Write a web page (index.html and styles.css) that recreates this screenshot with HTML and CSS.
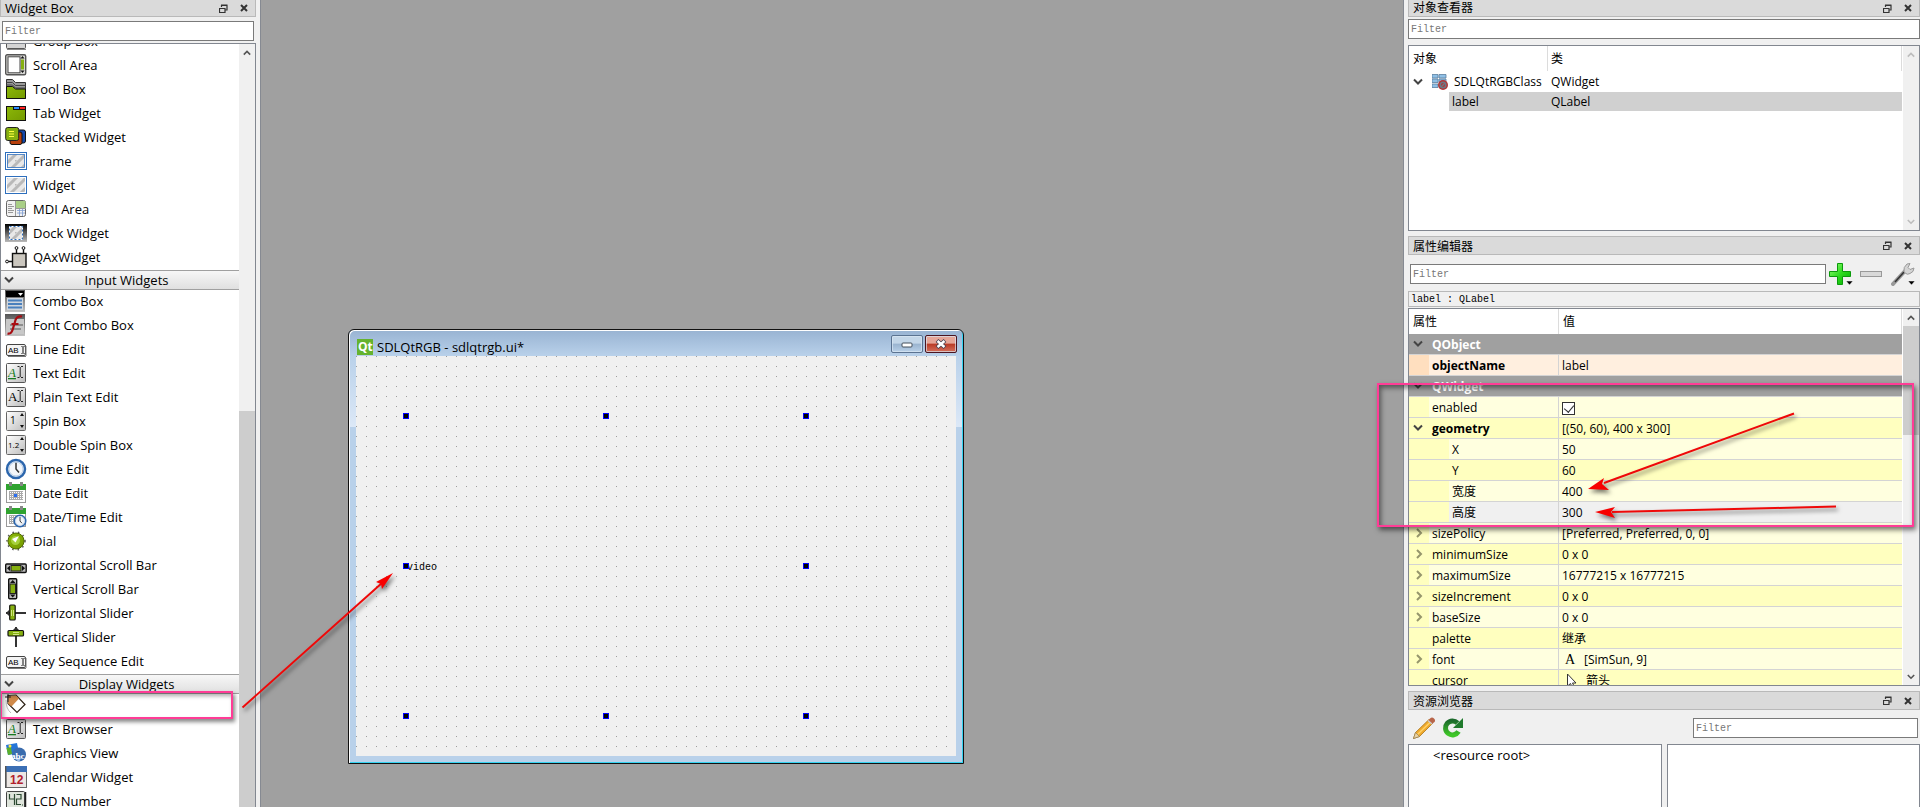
FILE: index.html
```html
<!DOCTYPE html>
<html lang="zh-CN">
<head>
<meta charset="utf-8">
<title>Qt Designer</title>
<link rel="stylesheet" href="styles.css">
</head>
<body>
<svg class="defs" width="0" height="0" aria-hidden="true">
  <defs>
    <linearGradient id="green" x1="0" y1="0" x2="1" y2="1"><stop offset="0" stop-color="#8cb808"/><stop offset="1" stop-color="#749a00"/></linearGradient>
    <linearGradient id="plate" x1="0" y1="0" x2="1" y2="1"><stop offset="0" stop-color="#fff"/><stop offset="1" stop-color="#bcbcbc"/></linearGradient>
    <linearGradient id="dark" x1="0" y1="0" x2="0" y2="1"><stop offset="0" stop-color="#000"/><stop offset="1" stop-color="#bbb"/></linearGradient>
    <linearGradient id="tile" x1="0" y1="0" x2="0" y2="1"><stop offset="0" stop-color="#555"/><stop offset="1" stop-color="#c4c4c4"/></linearGradient>
    <linearGradient id="plus" x1="0" y1="0" x2="1" y2="1"><stop offset="0" stop-color="#9bff7a"/><stop offset=".5" stop-color="#2fdc20"/><stop offset="1" stop-color="#00a800"/></linearGradient>
    <linearGradient id="swirl" x1="0" y1="0" x2="0" y2="1"><stop offset="0" stop-color="#1d6b2c"/><stop offset="1" stop-color="#3fc728"/></linearGradient>
    <pattern id="stripes" width="10" height="10" patternUnits="userSpaceOnUse"><rect width="10" height="10" fill="#e8e8e8"/><path d="M-2 7 7-2M0 15 15 0M-5 5 5-5" stroke="#b9b9b9" stroke-width="3"/></pattern>
    <pattern id="grid" width="10" height="10" patternUnits="userSpaceOnUse"><rect width="1" height="1" fill="#9c9c9c"/></pattern>
    <symbol id="chev-down" viewBox="0 0 10 8"><path d="M1 1.500 5 5.500 9 1.500" fill="none" stroke="currentColor" stroke-width="2"/></symbol>
    <symbol id="chev-up" viewBox="0 0 10 8"><path d="M1 6 5 2 9 6" fill="none" stroke="currentColor" stroke-width="2"/></symbol>
    <symbol id="chev-right" viewBox="0 0 8 10"><path d="M2 1 6 5 2 9" fill="none" stroke="currentColor" stroke-width="2"/></symbol>
    <symbol id="float" viewBox="0 0 9 9"><path d="M2.500 3V1.500H8V6H6.500M2 1H8.500M.500 4.500H6V8.500H.500ZM0 4.500H6.500" fill="none" stroke="#333" stroke-width="1.200"/></symbol>
    <symbol id="close" viewBox="0 0 8 8"><path d="M1 1 7 7M7 1 1 7" stroke="#333" stroke-width="2"/></symbol>
    <symbol id="text-edit" viewBox="0 0 22 22"><rect x="1.500" y="1.500" width="19" height="19" rx="1" fill="url(#plate)" stroke="#555"/><path d="M12.500 4.500h2M16 4.500h2M15.200 5v10M12.500 15.500h2M16 15.500h2" stroke="#222" fill="none"/></symbol>
    <symbol id="abi" viewBox="0 0 22 22"><rect x="1.500" y="6.500" width="19" height="11" rx="1.500" fill="#f4f4f4" stroke="#444"/><path d="M3 18.500h18M21 8v10" stroke="#777"/><path d="M16.500 8.500h1M18.500 8.500h1M18 9v6M16.500 15.500h1M18.500 15.500h1" stroke="#111"/></symbol>
    <symbol id="cal" viewBox="0 0 22 22"><rect x="1.500" y="3.500" width="19" height="17" fill="#fff" stroke="#999"/><rect x="1" y="2" width="20" height="6" fill="#2fa32f"/><path d="M5.500 0v4M16.500 0v4" stroke="#888" stroke-width="3"/><path d="M4 9.500h14M4 11.500h14M4 13.500h14M4 15.500h14M4 17.500h14M4.500 9v9M6.500 9v9M8.500 9v9M10.500 9v9M12.500 9v9M14.500 9v9M16.500 9v9" stroke="#aaa" stroke-width="1"/></symbol>
    <symbol id="clock" viewBox="0 0 22 22"><circle cx="11" cy="11" r="9" fill="#f3f6fa" stroke="#2c66ad" stroke-width="2.500"/><path d="M11 4.500V11l3 3.500" fill="none" stroke="#333" stroke-width="1.500"/><circle cx="11" cy="11" r="7" fill="none" stroke="#b5cbe6"/></symbol>
  </defs>
</svg>

<main class="designer">
  <aside class="toolbox">
    <header class="dock-title dock-title--top"><h2>Widget Box</h2>
      <button aria-label="Float"><svg width="9" height="9"><use href="#float"/></svg></button><button aria-label="Close"><svg width="8" height="8"><use href="#close"/></svg></button></header>
    <input class="filter toolbox__filter" type="text" placeholder="Filter" aria-label="Widget filter">
    <div class="frame toolbox__frame">
      <div class="toolbox__view">
        <ul class="widgets widgets--scrolled">
          <li><svg viewBox="0 0 22 22"><rect x="1.500" y="1.500" width="19" height="17" rx="1" fill="#d4d4d4" stroke="#555"/><path d="M2 19.500h19" stroke="#888"/></svg>Group Box</li>
          <li><svg viewBox="0 0 22 22"><rect x=".7" y=".7" width="20" height="20" rx="1.500" fill="#d9d9d6" stroke="#555" stroke-width="1.400"/><rect x="3" y="2.800" width="12" height="16" fill="#fff" stroke="#444"/><rect x="16" y="5.500" width="3" height="10" fill="#86b010"/><path d="M15.500 4.500 17.500 2l2 2.500zM15.500 16.500l2 2.500 2-2.500z" fill="#111"/></svg>Scroll Area</li>
          <li><svg viewBox="0 0 22 22"><path d="M1.500 1.500h6l3 3h10v16h-19z" fill="#999" stroke="#333"/><path d="M1.500 4.500h6l3 3h10M1.500 7h6l3 3h10" fill="none" stroke="#444"/><path d="M1.500 8.500h6l3 2.500h10v9.500h-19z" fill="url(#green)" stroke="#111"/></svg>Tool Box</li>
          <li><svg viewBox="0 0 22 22"><rect x="1.500" y="4.500" width="19" height="14" fill="url(#green)" stroke="#111"/><path d="M8 4h13v4H8z" fill="#111"/><rect x="9" y="5" width="5" height="2" fill="#2a8cff"/><rect x="15" y="5" width="5" height="2" fill="#f22"/></svg>Tab Widget</li>
          <li><svg viewBox="0 0 22 22"><rect x="10.500" y="4" width="10" height="13" rx="2" fill="#1446a8" stroke="#111"/><rect x="5" y="6" width="12" height="12.500" rx="2" fill="#b8400c" stroke="#111"/><rect x=".7" y="1.500" width="13" height="13" rx="2" fill="#86b010" stroke="#222"/><path d="M4 5.500h5M4 8h5M4 10.500h5" stroke="#ffff40" stroke-width="1.200"/></svg>Stacked Widget</li>
          <li><svg viewBox="0 0 22 22"><rect x=".5" y="2.500" width="21" height="17" fill="#fff" stroke="#2e6fbd"/><rect x="2.500" y="4.500" width="17" height="13" fill="url(#stripes)" stroke="#2e6fbd" stroke-width=".8"/></svg>Frame</li>
          <li><svg viewBox="0 0 22 22"><rect x=".5" y="2.500" width="21" height="17" fill="#fff" stroke="#2e6fbd"/><rect x="2" y="4" width="18" height="14" fill="url(#stripes)"/></svg>Widget</li>
          <li><svg viewBox="0 0 22 22"><rect x="1.500" y="2.500" width="19" height="16" rx="2" fill="#f2f2f2" stroke="#666"/><rect x="11" y="3" width="9.500" height="7" fill="#a9cf86"/><path d="M10.500 3v15M11 10.500h10M3 6.500h4M3 8.500h6M3 10.500h4M3 12.500h6M3 14.500h5" stroke="#999"/><path d="M12 12.500h8M12 15h8M14.500 11v7M17.500 11v7" stroke="#7d9cd0" stroke-width=".8"/></svg>MDI Area</li>
          <li><svg viewBox="0 0 22 22"><rect y="2" width="22" height="18" fill="url(#dark)"/><rect x="4.500" y="4.500" width="13" height="13" fill="url(#stripes)" stroke="#fff"/><rect x="4.500" y="4.500" width="13" height="13" fill="none" stroke="#2e6fbd" stroke-dasharray="2 2"/></svg>Dock Widget</li>
          <li><svg viewBox="0 0 22 22"><rect x="7.500" y="7.500" width="13.500" height="13.500" fill="#cbc7bf" stroke="#111" stroke-width="1.400"/><path d="M11.500 7V3M18.500 7V3M7 15.500H3" stroke="#111" stroke-width="1.400"/><circle cx="11.500" cy="2" r="1.400" fill="#fff" stroke="#111"/><circle cx="18.500" cy="2" r="1.400" fill="#fff" stroke="#111"/><circle cx="2" cy="15.500" r="1.400" fill="#fff" stroke="#111"/></svg>QAxWidget</li>
        </ul>
        <button class="category"><svg width="10" height="8"><use href="#chev-down"/></svg><span>Input Widgets</span></button>
        <ul class="widgets">
          <li><svg viewBox="0 0 22 22"><rect width="20" height="22" fill="url(#tile)"/><rect x="1" y="1" width="18" height="6" fill="#000"/><path d="M13 3h5l-2.500 3z" fill="#fff"/><rect x="2" y="8" width="16" height="12" fill="#cfd6de"/><path d="M3 10.500h14M3 14h14M3 17.500h14" stroke="#4a80bd" stroke-width="2"/></svg>Combo Box</li>
          <li><svg viewBox="0 0 22 22"><rect width="20" height="22" fill="url(#tile)"/><rect x="1" y="5" width="18" height="15" fill="#c8c8c8"/><path d="M5 11h13M5 15h11" stroke="#8e8e8e" stroke-width="2"/><path d="M2.500 19.500q4 1 5.500-5L10.500 6q1.500-4 6.500-3.500M6.500 10h7" fill="none" stroke="#a80d12" stroke-width="2.200"/></svg>Font Combo Box</li>
          <li><svg viewBox="0 0 22 22"><use href="#abi"/><text class="glyph-abc" x="3" y="15">AB</text></svg>Line Edit</li>
          <li><svg viewBox="0 0 22 22"><use href="#text-edit"/><text class="glyph-a glyph-a--rich" x="3" y="15">A</text></svg>Text Edit</li>
          <li><svg viewBox="0 0 22 22"><use href="#text-edit"/><text class="glyph-a" x="3" y="15">A</text></svg>Plain Text Edit</li>
          <li><svg viewBox="0 0 22 22"><rect x="1.500" y="1.500" width="19" height="19" rx="1" fill="url(#plate)" stroke="#666"/><text class="glyph-num" x="5" y="14">1</text><path d="M15 6l2-3 2 3zM15 15l2 3 2-3z" fill="#111"/></svg>Spin Box</li>
          <li><svg viewBox="0 0 22 22"><rect x="1.500" y="1.500" width="19" height="19" rx="1" fill="url(#plate)" stroke="#666"/><text class="glyph-small" x="3" y="14">1.2</text><path d="M15 6l2-3 2 3zM15 15l2 3 2-3z" fill="#111"/></svg>Double Spin Box</li>
          <li><svg viewBox="0 0 22 22"><use href="#clock"/></svg>Time Edit</li>
          <li><svg viewBox="0 0 22 22"><use href="#cal"/><rect x="9" y="12" width="3" height="3" fill="#2a6ff0"/></svg>Date Edit</li>
          <li><svg viewBox="0 0 22 22"><use href="#cal"/><use href="#clock" x="8" y="8" width="14" height="14"/></svg>Date/Time Edit</li>
          <li><svg viewBox="0 0 22 22"><circle cx="11" cy="11" r="9" fill="none" stroke="#555" stroke-width="1.500" stroke-dasharray="1.500 4"/><circle cx="11" cy="11" r="8" fill="url(#green)" stroke="#4f6a00"/><circle cx="10.500" cy="10.500" r="4.500" fill="#a5d03a"/><path d="M7 9l7-3-3.500 6.500z" fill="#fff"/></svg>Dial</li>
          <li><svg viewBox="0 0 22 22"><rect x=".7" y="10" width="20.500" height="8.500" rx="1" fill="#bbb" stroke="#111" stroke-width="1.400"/><rect x="6" y="11.500" width="10" height="5.500" fill="#86b010" stroke="#222"/><path d="M5 11.500v5.500L2 14.200zM17 11.500v5.500l3-2.800z" fill="#111"/></svg>Horizontal Scroll Bar</li>
          <li><svg viewBox="0 0 22 22"><rect x="3.700" y=".7" width="8" height="20" rx="1" fill="#bbb" stroke="#111" stroke-width="1.400"/><rect x="5" y="6" width="5.500" height="9.500" fill="#86b010" stroke="#222"/><path d="M5 5h5.500L7.700 2zM5 16.500h5.500L7.700 19.500z" fill="#111"/></svg>Vertical Scroll Bar</li>
          <li><svg viewBox="0 0 22 22"><path d="M1 11h20" stroke="#333" stroke-width="2"/><path d="M4 8 1 11l3 3z" fill="#333"/><rect x="4.700" y="3" width="5.500" height="15" rx="1" fill="#86b010" stroke="#111" stroke-width="1.200"/><path d="M6.500 8v6M8.500 8v6" stroke="#e4f5a0" stroke-width=".8"/></svg>Horizontal Slider</li>
          <li><svg viewBox="0 0 22 22"><path d="M11 1v20" stroke="#333" stroke-width="2"/><path d="M8 4l3-3 3 3z" fill="#333"/><rect x="3" y="4.500" width="15.500" height="5.500" rx="1" fill="#86b010" stroke="#111" stroke-width="1.200"/><path d="M8 6.500h6M8 8.500h6" stroke="#e4f5a0" stroke-width=".8"/></svg>Vertical Slider</li>
          <li><svg viewBox="0 0 22 22"><use href="#abi"/><text class="glyph-abc" x="3" y="15">AB</text></svg>Key Sequence Edit</li>
        </ul>
        <button class="category"><svg width="10" height="8"><use href="#chev-down"/></svg><span>Display Widgets</span></button>
        <ul class="widgets">
          <li class="marked"><svg viewBox="0 0 22 22"><path d="M3 1.500 11 1l9 9.500-8 8L3 9.500z" fill="#fff" stroke="#2b2014" stroke-width="1.200"/><path d="M3.500 2 11 1.500l3 3-7.500 8L3 9.500z" fill="#d08a4a"/><path d="M0 3h6M3 0v8" stroke="#222" fill="none"/><path d="M1 6q0 9 5 13" stroke="#bbb" fill="none"/></svg>Label</li>
          <li><svg viewBox="0 0 22 22"><use href="#text-edit"/><text class="glyph-a glyph-a--rich" x="3" y="15">A</text></svg>Text Browser</li>
          <li><svg viewBox="0 0 22 22"><path d="M1 3 12 1l2 10L3 13z" fill="#2676d8"/><path d="M1.500 6 6 5l1 7-4 1z" fill="#5bb02b"/><circle cx="5" cy="4" r="1.500" fill="#ffe84a"/><circle cx="14" cy="12.500" r="7" fill="#3a6cae"/><path d="M9 16h7l-2 4z" fill="#9fc0e8"/><text class="glyph-gv" x="6" y="17">abc</text></svg>Graphics View</li>
          <li><svg viewBox="0 0 22 22"><rect x="1" y=".5" width="20.500" height="21" fill="#ece7e4" stroke="#666"/><rect x="1" y="0" width="21" height="6" fill="#3b6fb5"/><path d="M.7 0v22" stroke="#555" stroke-width="1.400"/><text class="glyph-cal" x="5" y="18">12</text></svg>Calendar Widget</li>
          <li><svg viewBox="0 0 22 22"><rect x="1.500" y="1.500" width="18" height="19" rx="1" fill="#dfe5dc" stroke="#444"/><path d="M20.500 2v19" stroke="#222" stroke-width="1.500"/><path d="M4.500 4v5h4.500M9.500 4v11M11.500 4.500h4.500V9h-4.500v5.500H16M17 15h1" fill="none" stroke="#2c4a32" stroke-width="1.200"/></svg>LCD Number</li>
        </ul>
      </div>
      <div class="scroll"><button aria-label="Scroll up"><svg width="8" height="8"><use href="#chev-up"/></svg></button><div class="scroll__lead"></div><div class="scroll__thumb"></div></div>
    </div>
  </aside>

  <section class="workspace">
    <article class="form-window">
      <header class="form-window__bar">
        <svg class="form-window__logo" viewBox="0 0 16 16"><path d="M0 0h16v16H0z" fill="#65b32e"/><text class="glyph-qt" x="1" y="12">Qt</text></svg>
        <h1>SDLQtRGB - sdlqtrgb.ui*</h1>
        <button class="win-min" aria-label="Minimize"><svg width="12" height="6"><rect x="1" y="1" width="10" height="4" rx="1" fill="#fff" stroke="#45505c"/></svg></button>
        <button class="win-close" aria-label="Close form"><svg width="12" height="10" viewBox="0 0 12 10"><path d="M2 1.500 10 8.500M10 1.500 2 8.500" stroke="#454050" stroke-width="4"/><path d="M2.500 2 9.500 8M9.500 2 2.500 8" stroke="#fff" stroke-width="2.400"/></svg></button>
      </header>
      <div class="canvas">
        <svg width="100%" height="100%"><rect width="100%" height="100%" fill="url(#grid)"/></svg>
        <div class="selected"><span>video</span>
          <i class="h n w"></i><i class="h n c"></i><i class="h n e"></i><i class="h m w"></i><i class="h m e"></i><i class="h s w"></i><i class="h s c"></i><i class="h s e"></i>
        </div>
      </div>
    </article>
  </section>

  <aside class="sidebar">
    <section class="dock">
      <header class="dock-title dock-title--top"><h2>对象查看器</h2>
        <button aria-label="Float"><svg width="9" height="9"><use href="#float"/></svg></button><button aria-label="Close"><svg width="8" height="8"><use href="#close"/></svg></button></header>
      <input class="filter inspector__filter" type="text" placeholder="Filter" aria-label="Object filter">
      <div class="frame inspector__frame">
        <div class="table-view">
          <table class="inspector">
            <thead><tr><th>对象</th><th>类</th></tr></thead>
            <tbody>
              <tr><td><div class="tree"><svg width="10" height="8"><use href="#chev-down"/></svg>
                <svg class="tree__icon" width="16" height="16" viewBox="0 0 16 16"><path d="M0 .5h6v3.500H0zM7 .5h7v3.500H7zM0 5h6v3.500H0zM7 5h7v3.500H7zM0 10h6v3.500H0z" fill="#8fc0e6" stroke="#5a7f9f" stroke-width=".8"/><circle cx="11" cy="11" r="5" fill="#b33535"/><circle cx="11" cy="11" r="2.800" fill="none" stroke="#6e7884" stroke-width="1.500"/><path d="M9 13l4-4" stroke="#6e7884" stroke-width="1.500"/></svg>SDLQtRGBClass</div></td><td>QWidget</td></tr>
              <tr class="is-selected"><td><div class="tree tree--child">label</div></td><td>QLabel</td></tr>
            </tbody>
          </table>
        </div>
        <div class="scroll scroll--off"><button aria-label="Scroll up" disabled><svg width="8" height="8"><use href="#chev-up"/></svg></button><div class="scroll__rest"></div><button aria-label="Scroll down" disabled><svg width="8" height="8"><use href="#chev-down"/></svg></button></div>
      </div>
    </section>

    <section class="dock dock--props">
      <header class="dock-title"><h2>属性编辑器</h2>
        <button aria-label="Float"><svg width="9" height="9"><use href="#float"/></svg></button><button aria-label="Close"><svg width="8" height="8"><use href="#close"/></svg></button></header>
      <div class="props__tools">
        <input class="filter" type="text" placeholder="Filter" aria-label="Property filter">
        <button aria-label="Add property"><svg width="24" height="24" viewBox="0 0 24 24"><path d="M8.500 1.500h5v8h8v5h-8v8h-5v-8h-8v-5h8z" fill="url(#plus)" stroke="#0b9a0b"/><path d="M17 19h7l-3.500 4z" fill="#000" stroke="#fff" stroke-width=".5"/></svg></button>
        <button aria-label="Remove property" disabled><svg width="22" height="24" viewBox="0 0 22 24"><rect x=".5" y="9.500" width="21" height="5" fill="#d9d9d9" stroke="#999"/></svg></button>
        <button class="props__config" aria-label="Configure"><svg width="24" height="24" viewBox="0 0 24 24"><path d="M2 22 14 9" stroke="#999" stroke-width="4" stroke-linecap="round"/><path d="M4 20 13 10" stroke="#333" stroke-width="1.500"/><path d="M13 10q-1-5 3-8l3-.5-2 4 2 2 4-1.500q0 4-4 5.500-3 1.500-4 0z" fill="#d4d4d4" stroke="#999"/><path d="M17 19h7l-3.500 4z" fill="#000" stroke="#fff" stroke-width=".5"/></svg></button>
      </div>
      <p class="props__object">label : QLabel</p>
      <div class="frame props__frame">
        <div class="table-view">
          <table class="props">
            <thead><tr><th>属性</th><th>值</th></tr></thead>
            <tbody>
              <tr class="group"><td colspan="2"><div class="cell"><b><svg width="10" height="8"><use href="#chev-down"/></svg></b>QObject</div></td></tr>
              <tr class="peach"><td><div class="cell strong"><b></b>objectName</div></td><td>label</td></tr>
              <tr class="group"><td colspan="2"><div class="cell"><b><svg width="10" height="8"><use href="#chev-down"/></svg></b>QWidget</div></td></tr>
              <tr><td><div class="cell"><b></b><label for="enabled">enabled</label></div></td><td><input type="checkbox" id="enabled" checked></td></tr>
              <tr class="deep"><td><div class="cell strong"><b><svg width="10" height="8"><use href="#chev-down"/></svg></b>geometry</div></td><td>[(50, 60), 400 x 300]</td></tr>
              <tr><td><div class="cell sub"><b></b>X</div></td><td>50</td></tr>
              <tr class="deep"><td><div class="cell sub"><b></b>Y</div></td><td>60</td></tr>
              <tr><td><div class="cell sub"><b></b>宽度</div></td><td>400</td></tr>
              <tr class="current"><td><div class="cell sub"><b></b>高度</div></td><td>300</td></tr>
              <tr><td><div class="cell fold"><b><svg width="8" height="10"><use href="#chev-right"/></svg></b>sizePolicy</div></td><td>[Preferred, Preferred, 0, 0]</td></tr>
              <tr class="deep"><td><div class="cell fold"><b><svg width="8" height="10"><use href="#chev-right"/></svg></b>minimumSize</div></td><td>0 x 0</td></tr>
              <tr><td><div class="cell fold"><b><svg width="8" height="10"><use href="#chev-right"/></svg></b>maximumSize</div></td><td>16777215 x 16777215</td></tr>
              <tr class="deep"><td><div class="cell fold"><b><svg width="8" height="10"><use href="#chev-right"/></svg></b>sizeIncrement</div></td><td>0 x 0</td></tr>
              <tr><td><div class="cell fold"><b><svg width="8" height="10"><use href="#chev-right"/></svg></b>baseSize</div></td><td>0 x 0</td></tr>
              <tr class="deep"><td><div class="cell"><b></b>palette</div></td><td>继承</td></tr>
              <tr><td><div class="cell fold"><b><svg width="8" height="10"><use href="#chev-right"/></svg></b>font</div></td><td><div class="value-icon"><span class="font-a">A</span>[SimSun, 9]</div></td></tr>
              <tr class="deep"><td><div class="cell"><b></b>cursor</div></td><td><div class="value-icon"><svg width="16" height="16" viewBox="0 0 16 16"><path d="M5.500 1v12l3-2.500 2 4.500 2-1-2-4h3.500z" fill="#fff" stroke="#333"/></svg>箭头</div></td></tr>
            </tbody>
          </table>
        </div>
        <div class="scroll"><button aria-label="Scroll up"><svg width="8" height="8"><use href="#chev-up"/></svg></button><div class="scroll__thumb scroll__thumb--props"></div><div class="scroll__rest"></div><button aria-label="Scroll down"><svg width="8" height="8"><use href="#chev-down"/></svg></button></div>
        <div class="callout"></div>
        <svg class="arrows" width="260" height="120" viewBox="1580 405 260 120" aria-hidden="true">
          <path d="M1794 413.500 1604 483" stroke="#ef0808" stroke-width="2"/><path d="M1588 489 1604 478 1602 484 1609 490z" fill="#f80000"/>
          <path d="M1836 506.500 1612 512" stroke="#ef0808" stroke-width="2"/><path d="M1595 512 1615 507 1611 512 1615 518z" fill="#f80000"/>
        </svg>
      </div>
    </section>

    <section class="dock">
      <header class="dock-title"><h2>资源浏览器</h2>
        <button aria-label="Float"><svg width="9" height="9"><use href="#float"/></svg></button><button aria-label="Close"><svg width="8" height="8"><use href="#close"/></svg></button></header>
      <div class="res__tools">
        <button aria-label="Edit resources"><svg width="22" height="22" viewBox="0 0 22 22"><path d="M.5 21.500 2.500 15.500 16 2.500l4 3.500L6.500 19.500z" fill="#efa92c" stroke="#a8741c" stroke-width=".8"/><path d="M4.500 17.500 18 4.500" stroke="#ffd268" stroke-width="1.500"/><path d="M.5 21.500 2.500 15.500l4 4z" fill="#e8d2a4" stroke="#8a744c" stroke-width=".6"/><path d="M15 3.500 17 1.500q2-2 4 0t.5 3.500L19 7z" fill="#b8654a"/><path d="M15 3.500 19 7" stroke="#ccc" stroke-width="1.500"/></svg></button>
        <button aria-label="Reload"><svg width="22" height="22" viewBox="0 0 22 22"><path d="M16.500 14.500A7 7 0 1 1 15.500 6" fill="none" stroke="url(#swirl)" stroke-width="5"/><path d="M21 1v10H11z" fill="#1f7a2c"/></svg></button>
        <input class="filter" type="text" placeholder="Filter" aria-label="Resource filter">
      </div>
      <div class="res__panes"><div class="frame res__tree">&lt;resource root&gt;</div><div class="frame"></div></div>
    </section>
  </aside>

  <svg class="pointer" width="170" height="155" viewBox="235 562 170 155" aria-hidden="true"><path d="M242.500 707.500 382 583" stroke="#ef0808" stroke-width="2"/><path d="M393 573 376 582 381 584 382 589z" fill="#f80000"/></svg>
</main>
</body>
</html>
```
FILE: styles.css
```css
* { box-sizing: border-box; }
body {
  margin: 0;
  height: 100vh;
  overflow: hidden;
  background: #f0f0f0;
  color: #000;
  font: 12px/16px "Open Sans", "Noto Sans CJK SC", sans-serif;
}
h1, h2, p, ul { margin: 0; padding: 0; font-size: inherit; font-weight: 400; list-style: none; }
button { margin: 0; padding: 0; border: 0; background: none; color: inherit; font: inherit; display: flex; align-items: center; justify-content: center; }
svg { display: block; flex: none; }
.defs { position: absolute; }
.designer { position: relative; display: flex; height: 100%; }

/* Docks */
.dock-title {
  display: flex;
  flex: none;
  align-items: center;
  gap: 5px;
  height: 19px;
  padding: 0 3px 0 4px;
  border: 1px solid #b9b9b9;
  background: #dadada;
}
.dock-title--top { height: 17px; border-top: 0; }
.dock-title h2 { flex: 1; padding-top: 2px; line-height: 16px; }
.dock-title--top h2 { padding-top: 0; }
.dock-title button { width: 16px; height: 16px; }
.filter {
  height: 20px;
  min-width: 0;
  padding: 0 2px;
  border: 1px solid #7a7a7a;
  border-radius: 0;
  background: #fff;
  font: 10px/16px "Liberation Mono", monospace;
}
.filter::placeholder { color: #777; opacity: 1; }
.frame { display: flex; border: 1px solid #828790; background: #fff; }

.scroll { display: flex; flex: none; flex-direction: column; width: 16px; background: #f0f0f0; color: #555; }
.scroll button { flex: none; height: 17px; }
.scroll--off { color: #bdbdbd; }
.scroll__lead { flex: 350; }
.scroll__thumb { flex: 396; background: #cdcdcd; }
.scroll__thumb--props { flex: 0 0 109px; }
.scroll__rest { flex: 1; }

/* Widget box */
.toolbox {
  display: flex;
  flex: 0 0 261px;
  flex-direction: column;
  padding-right: 4px;
  border-right: 1px solid #868a92;
}
.toolbox h2 { font-size: 13px; }
.toolbox__filter { margin: 4px 2px 2px; }
.toolbox__frame { flex: 1; min-height: 0; border-bottom: 0; }
.toolbox__view { flex: 1; overflow: hidden; }
.widgets { font-size: 13px; }
.widgets--scrolled { margin-top: -14px; }
.widgets li { display: flex; align-items: center; gap: 6px; height: 24px; padding: 0 0 2px 4px; }
.widgets li svg { width: 22px; height: 22px; }
.marked { position: relative; }
.marked::after {
  content: "";
  position: absolute;
  inset: -3px 6px -1px -1px;
  border: 2px solid #ff3c96;
  box-shadow: 2px 3px 4px #0007, inset 2px 3px 4px #0005;
}
.category {
  width: 100%;
  height: 20px;
  padding: 0 0 1px 3px;
  border: solid #a0a0a0;
  border-width: 1px 0;
  background: linear-gradient(#f7f7f7, #e0e0e0);
  font-size: 13px;
}
.category svg { color: #444; }
.category span { flex: 1; text-align: center; }

.glyph-abc { font: 8px "Liberation Sans", sans-serif; }
.glyph-a { font: 13px "Liberation Serif", serif; }
.glyph-a--rich { fill: #177a22; font-style: italic; text-decoration: underline; }
.glyph-num { font: 10px "Open Sans", sans-serif; }
.glyph-small { font: 8px "Open Sans", sans-serif; }
.glyph-gv { font: 700 9px "Liberation Serif", serif; fill: #fff; }
.glyph-cal { font: 700 12px "Liberation Sans", sans-serif; fill: #b2202c; }
.glyph-qt { font: 700 12px "Open Sans", sans-serif; fill: #fff; }

/* Form being edited */
.workspace { position: relative; flex: 1; min-width: 0; overflow: hidden; background: #a0a0a0; }
.form-window {
  position: absolute;
  left: 87px;
  top: 329px;
  padding: 0 7px 7px;
  border: 1px solid #111;
  border-radius: 6px 6px 0 0;
  background:
    linear-gradient(#98b3d2, #b9d1ea) 0 0 / 100% 26px no-repeat,
    linear-gradient(#b9d1ea, #dce8f7) 0 26px / 100% 71px no-repeat,
    #b9d1ea;
  box-shadow: inset 1px 1px #fff, inset -1px -1px #34d3f2;
}
.form-window__bar { display: flex; align-items: flex-start; height: 26px; padding: 5px 0 0 1px; }
.form-window__logo { width: 16px; height: 16px; margin-top: 4px; }
.form-window__bar h1 { flex: 1; margin: 4px 0 0 4px; font-size: 13px; line-height: 16px; }
.form-window__bar button { width: 32px; height: 18px; margin-right: 2px; border: 1px solid #5b7391; border-radius: 2px; background: linear-gradient(#c3d6e8 45%, #9ab4cf 50%, #b8d0e8); box-shadow: inset 0 0 0 1px #dbe8f5aa; }
.form-window__bar .win-min { padding-top: 2px; }
.form-window__bar .win-close { margin-right: -1px; border-color: #4b1420; background: linear-gradient(#e5a597 45%, #b93a25 50%, #d4705c); }
.canvas { position: relative; width: 600px; height: 400px; background: #f0f0f0; }
.selected { position: absolute; left: 50px; top: 60px; display: flex; align-items: center; width: 400px; height: 300px; padding: 3px 0 0 1px; font: 10px/12px "Liberation Mono", monospace; }
.h { position: absolute; width: 6px; height: 6px; margin: -3px; border: 1px solid #00f; background: #000; }
.n { top: 0; } .m { top: 50%; } .s { top: 100%; }
.w { left: 0; } .c { left: 50%; } .e { left: 100%; }

/* Right column */
.sidebar { display: grid; flex: 0 0 517px; grid-template-rows: 236px 1fr 116px; padding-left: 4px; border-left: 1px solid #868a92; }
.dock { display: flex; flex-direction: column; min-height: 0; }
.table-view { flex: 1; min-width: 0; overflow: hidden; margin-right: 1px; }
table { width: 100%; table-layout: fixed; border-spacing: 0; }
th, td { padding: 0; font-weight: 400; text-align: left; white-space: nowrap; }
th { height: 25px; padding-left: 4px; border-right: 1px solid #dcdcdc; }

.inspector__filter { margin: 2px 0 6px; }
.inspector__frame { flex: 1; min-height: 0; margin-bottom: 5px; }
.inspector th:first-child { width: 139px; }
.inspector th:last-child { padding-left: 3px; }
.inspector td { height: 21px; padding-left: 3px; }
.inspector td:first-child { padding-left: 4px; }
.tree { display: flex; align-items: center; }
.tree svg { color: #444; }
.tree__icon { margin: 0 6px 0 9px; }
.inspector .is-selected td { height: 19px; background: #d0d0d0; }
.inspector .is-selected td:first-child { padding-left: 40px; background: linear-gradient(#d0d0d0, #d0d0d0) 40px 0 no-repeat; }
.tree--child { padding-left: 3px; }

.props__tools { display: flex; align-items: center; gap: 7px; padding: 7px 5px 3px 2px; }
.props__tools .filter { flex: 1; margin-right: -4px; }
.props__config { margin-left: 2px; }
.props__object { height: 16px; margin: 2px 0 1px; padding: 0 2px; border: 1px solid #b9b9b9; font: 10px/16px "Liberation Mono", monospace; }
.props__frame { position: relative; flex: 1; min-height: 0; margin-bottom: 5px; }
.props th:first-child { width: 150px; }
.props td { height: 21px; padding: 2px 0 0 3px; border-bottom: 1px solid #d4d4d4; background: #ffffdf; }
.props td:first-child { padding: 0; border-right: 1px solid #d4d4d4; }
.props .deep td { background: #ffffbf; }
.props .peach td { background: #ffefdf; }
.props .current td { background: #f0f0f0; }
.props .group td { border-right: 0; background: #a0a0a0; color: #fff; font-weight: 700; }
.cell { display: flex; align-items: center; height: 20px; padding-top: 2px; }
.cell b { display: flex; align-items: center; flex: none; width: 20px; height: 20px; margin: -2px 3px 0 0; padding-left: 4px; background: #ffffbf; color: #444; }
.cell.sub b { width: 40px; }
.cell.fold b { padding-left: 6px; color: #96966c; }
.peach .cell b { background: #ffdfbf; }
.group .cell b { background: none; }
.strong { font-weight: 700; }
.value-icon { display: flex; align-items: center; }
.value-icon svg { margin-right: 8px; }
.font-a { width: 16px; margin-right: 6px; text-align: center; font: 14px/16px "Liberation Serif", serif; }
.props input {
  display: block;
  width: 13px;
  height: 13px;
  margin: 0;
  appearance: none;
  border: 1px solid #333;
  background: #fff;
  position: relative;
}
.props input::after { content: ""; position: absolute; left: 3px; top: 0; width: 5px; height: 8px; border: solid #333; border-width: 0 1px 1px 0; transform: rotate(40deg); }

/* Annotations over the panels */
.callout { position: absolute; left: -32px; right: 5px; top: 74px; height: 144px; border: 2px solid #ff3c96; box-shadow: 2px 3px 5px #0008, inset 2px 3px 5px #0007; pointer-events: none; }
.arrows { position: absolute; left: 171px; top: 96px; filter: drop-shadow(2px 3px 2px #0008); pointer-events: none; }
.pointer { position: absolute; left: 235px; top: 562px; filter: drop-shadow(2px 3px 2px #0008); pointer-events: none; }

.res__tools { display: flex; align-items: center; gap: 7px; padding: 7px 2px 5px 5px; }
.res__tools .filter { width: 225px; margin-left: auto; }
.res__panes { display: grid; flex: 1; grid-template-columns: 254px 1fr; gap: 5px; }
.res__panes .frame { border-bottom: 0; }
.res__tree { padding: 2px 24px; font-size: 13px; }
```
